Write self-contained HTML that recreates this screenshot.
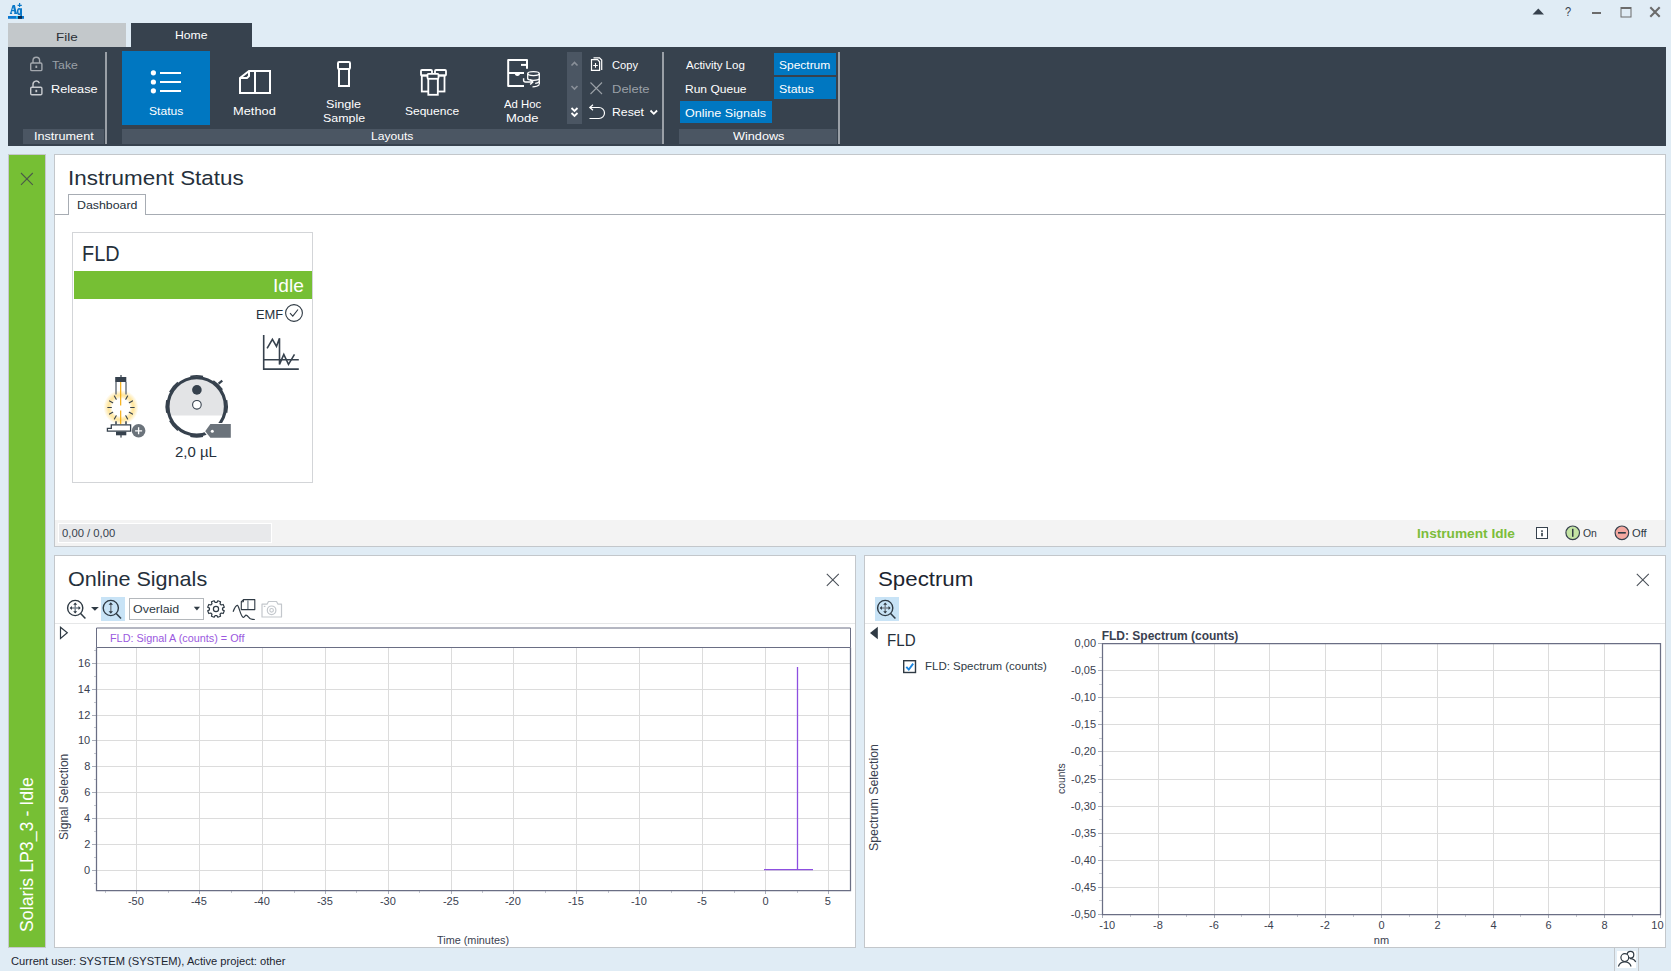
<!DOCTYPE html>
<html><head><meta charset="utf-8"><style>
html,body{margin:0;padding:0;}
body{width:1671px;height:971px;background:#e0ecf5;position:relative;overflow:hidden;font-family:"Liberation Sans",sans-serif;}
.t{position:absolute;white-space:nowrap;line-height:1;}
.r{position:absolute;}
svg.r{overflow:visible;}
</style></head><body>
<svg class="r" style="left:6px;top:1px;" width="20" height="20" viewBox="0 0 20 20"><g transform="translate(-6,-1)">
<path d="M12.6 5 H14.9 L16.8 13.3 H14.6 Z" fill="#0a78c8"/>
<path d="M13 5.6 L10.7 13.3 M11.8 10.6 H15.4 M9.9 13.3 H12.1 M14.2 13.3 H17.3" fill="none" stroke="#0a78c8" stroke-width="1.2"/>
<ellipse cx="19.2" cy="11.6" rx="1.5" ry="2.8" fill="none" stroke="#0a78c8" stroke-width="1.5"/>
<path d="M21.1 8.3 V16.2" stroke="#0a78c8" stroke-width="1.8"/>
<path d="M19.6 3 V7 M17.6 5.4 H21.8" stroke="#0a78c8" stroke-width="1.2"/>
<rect x="8" y="16" width="16" height="2.8" fill="#0a78d0"/>
<rect x="16" y="16" width="1.8" height="2.8" fill="#2cb8ee"/>
<rect x="18" y="16" width="4" height="2.8" fill="#0b2a4a"/>
</g></svg>
<svg class="r" style="left:1532px;top:8px;" width="13" height="7" viewBox="0 0 13 7"><path d="M0.5 6.5 L6.3 0.5 L12 6.5 Z" fill="#36414d"/></svg>
<div class="t" style="left:1564.56px;top:6.02px;font-size:12.5px;color:#36414d;transform:scaleX(0.8833);transform-origin:0 0;">?</div>
<div class="r" style="left:1592px;top:12px;width:9px;height:2px;background:#6b6b6b;"></div>
<svg class="r" style="left:1620px;top:6px;" width="12" height="11.5" viewBox="0 0 12 11.5"><rect x="1" y="1.5" width="10" height="9.5" fill="none" stroke="#6b6b6b" stroke-width="1"/><rect x="1" y="1" width="10" height="2" fill="#6b6b6b"/></svg>
<svg class="r" style="left:1649px;top:6px;" width="12" height="11.5" viewBox="0 0 12 11.5"><path d="M1.3 1.3 L10.7 10.7 M10.7 1.3 L1.3 10.7" stroke="#6b6b6b" stroke-width="2.1"/></svg>
<div class="r" style="left:8px;top:23px;width:118px;height:24px;background:#c3c8cb;"></div>
<div class="t" style="left:55.98px;top:32.37px;font-size:11.5px;color:#2a2f35;transform:scaleX(1.1679);transform-origin:0 0;">File</div>
<div class="r" style="left:131px;top:23px;width:121px;height:24px;background:#37424e;"></div>
<div class="t" style="left:175.07px;top:30.37px;font-size:11.5px;color:#ffffff;transform:scaleX(1.0598);transform-origin:0 0;">Home</div>
<div class="r" style="left:8px;top:47px;width:1658px;height:99px;background:#37424e;"></div>
<svg class="r" style="left:29px;top:56px;" width="15" height="16" viewBox="0 0 15 16"><path d="M4 7 V4.5 A3.3 3.3 0 0 1 10.6 4.5 V7" fill="none" stroke="#a3a8ae" stroke-width="1.4"/><rect x="1.7" y="7" width="11.2" height="7.6" rx="1.2" fill="none" stroke="#a3a8ae" stroke-width="1.4"/><rect x="6.4" y="9.6" width="1.8" height="2.4" fill="#a3a8ae"/></svg>
<div class="t" style="left:51.73px;top:59.87px;font-size:11.5px;color:#9aa0a7;transform:scaleX(1.0638);transform-origin:0 0;">Take</div>
<svg class="r" style="left:29px;top:80px;" width="15" height="16" viewBox="0 0 15 16"><path d="M4 7.2 V4.5 A3.3 3.3 0 0 1 10.4 3.2" fill="none" stroke="#c9ccd0" stroke-width="1.4"/><rect x="1.7" y="7.2" width="11.2" height="7.6" rx="1.2" fill="none" stroke="#c9ccd0" stroke-width="1.4"/><rect x="6.4" y="9.8" width="1.8" height="2.4" fill="#c9ccd0"/></svg>
<div class="t" style="left:51.03px;top:83.87px;font-size:11.5px;color:#ffffff;transform:scaleX(1.1043);transform-origin:0 0;">Release</div>
<div class="r" style="left:23px;top:129px;width:81px;height:15px;background:#4b5663;"></div>
<div class="t" style="left:33.70px;top:130.87px;font-size:11.5px;color:#ffffff;transform:scaleX(1.0986);transform-origin:0 0;">Instrument</div>
<div class="r" style="left:105px;top:52px;width:2px;height:92px;background:#9aa0a7;"></div>
<div class="r" style="left:122px;top:51px;width:88px;height:74px;background:#0077c1;"></div>
<svg class="r" style="left:150px;top:69px;" width="33" height="25" viewBox="0 0 33 25">
<circle cx="3.4" cy="3.8" r="2.6" fill="#fff"/><circle cx="3.4" cy="13" r="2.6" fill="#fff"/><circle cx="3.4" cy="21.8" r="2.6" fill="#fff"/>
<rect x="10" y="3" width="21" height="2" fill="#fff"/><rect x="10" y="12" width="21" height="2" fill="#fff"/><rect x="10" y="21" width="21" height="2" fill="#fff"/>
</svg>
<div class="t" style="left:148.77px;top:105.87px;font-size:11.5px;color:#ffffff;transform:scaleX(1.0520);transform-origin:0 0;">Status</div>
<svg class="r" style="left:238px;top:69px;" width="34" height="26" viewBox="0 0 34 26"><path d="M11 2 H32 V24 H2 V9 L11 2 Z M17 2 V24 M2 9 H9 L11 7 V2" fill="none" stroke="#fff" stroke-width="2" stroke-linejoin="miter"/></svg>
<div class="t" style="left:233.02px;top:105.87px;font-size:11.5px;color:#ffffff;transform:scaleX(1.1156);transform-origin:0 0;">Method</div>
<svg class="r" style="left:335px;top:59px;" width="18" height="29" viewBox="0 0 18 29"><rect x="3" y="3" width="12" height="7" rx="1.2" fill="none" stroke="#fff" stroke-width="2"/><rect x="4" y="10" width="10" height="17" fill="none" stroke="#fff" stroke-width="2"/></svg>
<div class="t" style="left:326.45px;top:98.87px;font-size:11.5px;color:#ffffff;transform:scaleX(1.0968);transform-origin:0 0;">Single</div>
<div class="t" style="left:322.96px;top:112.87px;font-size:11.5px;color:#ffffff;transform:scaleX(1.0789);transform-origin:0 0;">Sample</div>
<svg class="r" style="left:418px;top:67px;" width="30" height="30" viewBox="0 0 30 30">
<rect x="3" y="3" width="11" height="5.5" rx="1" fill="none" stroke="#fff" stroke-width="1.8"/>
<rect x="3.8" y="8.5" width="7" height="16" fill="none" stroke="#fff" stroke-width="1.8"/>
<rect x="17" y="3" width="11" height="5.5" rx="1" fill="none" stroke="#fff" stroke-width="1.8"/>
<rect x="19.5" y="8.5" width="7" height="16" fill="none" stroke="#fff" stroke-width="1.8"/>
<rect x="9.5" y="6.8" width="11" height="5" rx="1" fill="#37424e" stroke="#fff" stroke-width="1.8"/>
<rect x="10.3" y="11.8" width="9.5" height="16" fill="#37424e" stroke="#fff" stroke-width="1.8"/>
</svg>
<div class="t" style="left:405.48px;top:105.87px;font-size:11.5px;color:#ffffff;transform:scaleX(1.0443);transform-origin:0 0;">Sequence</div>
<svg class="r" style="left:505px;top:57px;" width="38" height="34" viewBox="0 0 38 34">
<path d="M19 28.9 H3.2 V3.1 H22 V11.8" fill="none" stroke="#fff" stroke-width="2" stroke-linejoin="round"/>
<path d="M16 7.9 H22" stroke="#fff" stroke-width="2"/>
<path d="M3.2 16 H19" stroke="#fff" stroke-width="2"/>
<path d="M9.8 16.5 A2.6 2.4 0 0 0 15 16.5 Z" fill="#fff"/>
<ellipse cx="28.5" cy="16.6" rx="5.8" ry="2" fill="none" stroke="#fff" stroke-width="1.3"/>
<path d="M22.7 16.6 V22.5 M34.3 16.6 V27.6 M22.7 21.3 A5.8 2 0 0 0 34.3 21.3" fill="none" stroke="#fff" stroke-width="1.3"/>
<path d="M30.2 26.3 Q33 26.2 34.3 24.6 M27.5 29.8 Q32.5 29.8 34.3 27.6" fill="none" stroke="#fff" stroke-width="1.3"/>
<path d="M18.6 21.2 V23.3 Q18.6 25 20.5 25 H27.6" fill="none" stroke="#fff" stroke-width="1.4"/>
<path d="M25.2 22.4 L27.8 25 L25.2 27.6" fill="none" stroke="#fff" stroke-width="1.4"/>
</svg>
<div class="t" style="left:504.00px;top:98.87px;font-size:11.5px;color:#ffffff;transform:scaleX(0.9867);transform-origin:0 0;">Ad Hoc</div>
<div class="t" style="left:506.01px;top:112.87px;font-size:11.5px;color:#ffffff;transform:scaleX(1.1324);transform-origin:0 0;">Mode</div>
<div class="r" style="left:567px;top:52px;width:15px;height:72px;background:#4b5663;"></div>
<svg class="r" style="left:567px;top:52px;" width="15" height="72" viewBox="0 0 15 72">
<path d="M4.5 13.5 L7.5 10.5 L10.5 13.5" fill="none" stroke="#8a9099" stroke-width="1.6"/>
<path d="M4.5 34 L7.5 37 L10.5 34" fill="none" stroke="#8a9099" stroke-width="1.6"/>
<path d="M4.5 56 L7.5 59 L10.5 56 M4.5 61 L7.5 64 L10.5 61" fill="none" stroke="#fff" stroke-width="1.8"/>
</svg>
<svg class="r" style="left:589px;top:56px;" width="16" height="17" viewBox="0 0 16 17">
<path d="M4.5 1.8 H10.5 L12.7 4 V14" fill="none" stroke="#fff" stroke-width="1.2"/>
<path d="M2.5 3.6 H8.6 L10.6 5.8 V14.4 H2.5 Z" fill="#37424e" stroke="#fff" stroke-width="1.2"/>
<path d="M6.5 7.1 V11.8 M4.2 9.5 H8.8" stroke="#fff" stroke-width="1.1"/>
</svg>
<div class="t" style="left:611.52px;top:59.87px;font-size:11.5px;color:#ffffff;transform:scaleX(0.9668);transform-origin:0 0;">Copy</div>
<svg class="r" style="left:589px;top:81px;" width="15" height="15" viewBox="0 0 15 15"><path d="M1.5 1.5 L13 13 M13 1.5 L1.5 13" stroke="#9aa0a7" stroke-width="1.1"/></svg>
<div class="t" style="left:611.51px;top:83.87px;font-size:11.5px;color:#9aa0a7;transform:scaleX(1.1294);transform-origin:0 0;">Delete</div>
<svg class="r" style="left:588px;top:104px;" width="18" height="16" viewBox="0 0 18 16"><path d="M2 3.5 H11 A5.5 5.5 0 0 1 11 14.5 H1.5" fill="none" stroke="#fff" stroke-width="1.2"/><path d="M5 0.8 L1.8 3.5 L5 6.2" fill="none" stroke="#fff" stroke-width="1.2"/></svg>
<div class="t" style="left:611.57px;top:106.87px;font-size:11.5px;color:#ffffff;transform:scaleX(1.0644);transform-origin:0 0;">Reset</div>
<svg class="r" style="left:649px;top:109px;" width="10" height="7" viewBox="0 0 10 7"><path d="M1.5 1.5 L4.8 4.8 L8.1 1.5" fill="none" stroke="#fff" stroke-width="1.8"/></svg>
<div class="r" style="left:122px;top:129px;width:540px;height:15px;background:#4b5663;"></div>
<div class="t" style="left:371.08px;top:130.87px;font-size:11.5px;color:#ffffff;transform:scaleX(1.0513);transform-origin:0 0;">Layouts</div>
<div class="r" style="left:662px;top:52px;width:2px;height:92px;background:#9aa0a7;"></div>
<div class="t" style="left:686.00px;top:60.37px;font-size:11.5px;color:#ffffff;">Activity Log</div>
<div class="t" style="left:685.08px;top:83.87px;font-size:11.5px;color:#ffffff;transform:scaleX(1.0458);transform-origin:0 0;">Run Queue</div>
<div class="r" style="left:680px;top:101px;width:92px;height:22px;background:#0077c1;"></div>
<div class="t" style="left:685.45px;top:107.87px;font-size:11.5px;color:#ffffff;transform:scaleX(1.0922);transform-origin:0 0;">Online Signals</div>
<div class="r" style="left:774px;top:53px;width:62px;height:22px;background:#0077c1;"></div>
<div class="t" style="left:779.48px;top:60.37px;font-size:11.5px;color:#ffffff;transform:scaleX(1.0417);transform-origin:0 0;">Spectrum</div>
<div class="r" style="left:774px;top:77px;width:62px;height:22px;background:#0077c1;"></div>
<div class="t" style="left:779.46px;top:83.87px;font-size:11.5px;color:#ffffff;transform:scaleX(1.0709);transform-origin:0 0;">Status</div>
<div class="r" style="left:679px;top:129px;width:158px;height:15px;background:#4b5663;"></div>
<div class="t" style="left:733.00px;top:130.87px;font-size:11.5px;color:#ffffff;transform:scaleX(1.1027);transform-origin:0 0;">Windows</div>
<div class="r" style="left:838px;top:52px;width:2px;height:92px;background:#9aa0a7;"></div>
<div class="r" style="left:8px;top:154px;width:36px;height:792px;border:1px solid #c5c8cc;background:#76bf34;"></div>
<svg class="r" style="left:20px;top:172px;" width="14" height="14" viewBox="0 0 14 14"><path d="M1 1 L12.8 12.8 M12.8 1 L1 12.8" stroke="#4b5a48" stroke-width="1.1"/></svg>
<div class="t" style="left:18.19px;top:931.50px;font-size:18.8px;color:#ffffff;transform:rotate(-90deg) scaleX(0.9447);transform-origin:0 0;">Solaris LP3_3 - Idle</div>
<div class="r" style="left:54px;top:154px;width:1610px;height:391px;border:1px solid #c3c7cb;background:#ffffff;"></div>
<div class="t" style="left:67.65px;top:167.55px;font-size:20.5px;color:#25303b;transform:scaleX(1.0937);transform-origin:0 0;">Instrument Status</div>
<div class="r" style="left:55px;top:214px;width:1610px;height:1px;background:#a7acb3;"></div>
<div class="r" style="left:68px;top:194px;width:76px;height:19px;border:1px solid #a7acb3;background:#ffffff;border-bottom:none;height:20px;"></div>
<div class="t" style="left:76.67px;top:199.18px;font-size:11.6px;color:#25303b;transform:scaleX(1.0665);transform-origin:0 0;">Dashboard</div>
<div class="r" style="left:72px;top:232px;width:239px;height:249px;border:1px solid #d3d5d8;background:#ffffff;"></div>
<div class="t" style="left:81.84px;top:243.16px;font-size:22.5px;color:#25303b;transform:scaleX(0.8833);transform-origin:0 0;">FLD</div>
<div class="r" style="left:74px;top:271px;width:238px;height:28px;background:#76bf34;"></div>
<div class="t" style="left:273.02px;top:276.94px;font-size:18.5px;color:#ffffff;transform:scaleX(1.0338);transform-origin:0 0;">Idle</div>
<div class="t" style="left:256.21px;top:307.90px;font-size:13px;color:#25303b;transform:scaleX(0.9923);transform-origin:0 0;">EMF</div>
<svg class="r" style="left:284px;top:303px;" width="20" height="20" viewBox="0 0 20 20"><circle cx="10" cy="10" r="8.4" fill="none" stroke="#2f3a44" stroke-width="1.1"/><path d="M6 10.2 L8.8 13.2 L14 6.5" fill="none" stroke="#2f3a44" stroke-width="1.1"/></svg>
<svg class="r" style="left:262px;top:334px;" width="38" height="37" viewBox="0 0 38 37"><path d="M1.7 1 V35.1 H36.8 M1.7 25.7 H36.8" fill="none" stroke="#36414d" stroke-width="1.6"/><path d="M5.1 14.4 L10.4 5.3 L14.5 12.3 L17.5 4.3 V30.4 L21.8 20.4 L26.5 30.4 L32.5 20.4" fill="none" stroke="#36414d" stroke-width="1.6" stroke-linejoin="miter"/></svg>
<div class="r" style="left:55px;top:520px;width:1610px;height:26px;background:#f3f3f3;"></div>
<div class="r" style="left:58px;top:523px;width:212px;height:18px;border:1px solid #ffffff;background:#e8e9eb;"></div>
<div class="t" style="left:62.12px;top:527.69px;font-size:11px;color:#36414d;transform:scaleX(1.0244);transform-origin:0 0;">0,00 / 0,00</div>
<div class="t" style="left:1416.58px;top:527.20px;font-size:13px;color:#7cbd3a;font-weight:bold;transform:scaleX(1.0511);transform-origin:0 0;">Instrument Idle</div>
<svg class="r" style="left:100px;top:370px;" width="48" height="72" viewBox="0 0 48 72">
<defs><radialGradient id="glow" cx="50%" cy="50%" r="50%"><stop offset="0%" stop-color="#ffffff" stop-opacity="1"/><stop offset="50%" stop-color="#ffffff" stop-opacity="1"/><stop offset="72%" stop-color="#ffd55e" stop-opacity="0.6"/><stop offset="100%" stop-color="#ffd55e" stop-opacity="0"/></radialGradient></defs>
<circle cx="21" cy="37.5" r="17.5" fill="url(#glow)"/>
<rect x="15.2" y="7" width="11.1" height="5" fill="#36414d"/>
<rect x="20.4" y="5" width="1.2" height="2.5" fill="#36414d"/>
<path d="M16 12 V24.5 M26 12 V24.5" stroke="#6f7780" stroke-width="1.5"/>
<path d="M16 51.2 V54.5 M26 51.2 V54.5" stroke="#36414d" stroke-width="1.5"/>
<path d="M20.7 12 V35.6 M20.7 40.4 V54.2" stroke="#f5a800" stroke-width="1.1"/>
<g stroke="#36414d" stroke-width="1.15" stroke-linecap="round">
<path d="M30.60 37.50 L34.20 37.50 M29.31 42.30 L32.43 44.10 M25.80 45.81 L27.60 48.93 M16.20 45.81 L14.40 48.93 M12.69 42.30 L9.57 44.10 M11.40 37.50 L7.80 37.50 M12.69 32.70 L9.57 30.90 M16.20 29.19 L14.40 26.07 M25.80 29.19 L27.60 26.07 M29.31 32.70 L32.43 30.90"/>
</g>
<path d="M11.3 54.8 H30.6 V61.2 H7.4 V58.3 H11.3 Z" fill="#ffffff" stroke="#36414d" stroke-width="1.3"/>
<rect x="16" y="61.6" width="10.3" height="3.7" fill="#36414d"/>
<rect x="20.4" y="65" width="1.2" height="2.6" fill="#36414d"/>
<circle cx="38.6" cy="60.8" r="6.8" fill="#6b737b"/>
<path d="M38.6 57.3 V64.3 M35.1 60.8 H42.1" stroke="#ffffff" stroke-width="1.3"/>
</svg>
<svg class="r" style="left:160px;top:370px;" width="76" height="72" viewBox="0 0 76 72">
<path d="M10.25 45.6 A28 28 0 1 1 63.15 45.6 Z" fill="#e3e4e6"/>
<circle cx="36.7" cy="36.4" r="28.7" fill="none" stroke="#36414d" stroke-width="3.1"/>
<path d="M30.36 6.57 A30.5 30.5 0 0 1 43.04 6.57 M9.77 22.08 A30.5 30.5 0 0 1 17.92 12.37 M6.87 42.74 A30.5 30.5 0 0 1 6.87 30.06 M17.92 60.43 A30.5 30.5 0 0 1 9.77 50.72 M43.04 66.23 A30.5 30.5 0 0 1 30.36 66.23 M66.53 30.06 A30.5 30.5 0 0 1 66.53 42.74 M53.31 10.82 A30.5 30.5 0 0 1 62.28 19.79" fill="none" stroke="#36414d" stroke-width="1.6"/>
<path d="M58.6 13.7 L62.3 10.7" stroke="#36414d" stroke-width="2.2"/>
<circle cx="36.9" cy="19.9" r="4.8" fill="#36414d"/>
<circle cx="36.9" cy="34.8" r="4.3" fill="#ffffff" stroke="#36414d" stroke-width="1.1"/>
<path d="M45.2 61.2 L50.4 54.1 H70.8 V67.8 H50.4 Z" fill="#6b737b" stroke="#ffffff" stroke-width="2.2" stroke-linejoin="round"/>
<path d="M45.2 61.2 L50.4 54.1 H70.8 V67.8 H50.4 Z" fill="#6b737b"/>
<circle cx="52.3" cy="61.2" r="1.5" fill="#ffffff"/>
</svg>
<div class="t" style="left:175.28px;top:443.88px;font-size:15.5px;color:#25303b;transform:scaleX(0.9638);transform-origin:0 0;">2,0 µL</div>
<svg class="r" style="left:1535px;top:526px;" width="15" height="14" viewBox="0 0 15 14"><rect x="1.5" y="1.5" width="11" height="11" fill="#ffffff" stroke="#36414d" stroke-width="1"/><rect x="6.2" y="4.3" width="1.6" height="1.6" fill="#2f3a44"/><rect x="6.2" y="6.8" width="1.6" height="3.5" fill="#2f3a44"/></svg>
<svg class="r" style="left:1564px;top:524px;" width="18" height="18" viewBox="0 0 18 18"><circle cx="8.7" cy="8.8" r="6.8" fill="#c3e3a3" stroke="#36414d" stroke-width="1.2"/><rect x="8" y="4.8" width="1.5" height="8" fill="#2f3a44"/></svg>
<div class="t" style="left:1582.55px;top:528.07px;font-size:11.5px;color:#2f3a44;transform:scaleX(0.9062);transform-origin:0 0;">On</div>
<svg class="r" style="left:1613px;top:524px;" width="18" height="18" viewBox="0 0 18 18"><circle cx="8.9" cy="8.8" r="6.8" fill="#f4a8a0" stroke="#36414d" stroke-width="1.2"/><rect x="5" y="8" width="7.8" height="1.6" fill="#2f3a44"/></svg>
<div class="t" style="left:1632.11px;top:528.07px;font-size:11.5px;color:#2f3a44;transform:scaleX(0.9709);transform-origin:0 0;">Off</div>
<div class="r" style="left:54px;top:555px;width:800px;height:391px;border:1px solid #c3c7cb;background:#ffffff;"></div>
<div class="t" style="left:67.77px;top:568.80px;font-size:20.2px;color:#25303b;transform:scaleX(1.0693);transform-origin:0 0;">Online Signals</div>
<svg class="r" style="left:826px;top:573px;" width="14" height="14" viewBox="0 0 14 14"><path d="M0.8 0.8 L12.8 12.8 M12.8 0.8 L0.8 12.8" stroke="#4a5058" stroke-width="1.05"/></svg>
<svg class="r" style="left:65px;top:597px;" width="24" height="24" viewBox="0 0 24 24">
<circle cx="10.2" cy="11" r="7.6" fill="none" stroke="#2f3a44" stroke-width="1.4"/>
<path d="M15.6 16.6 L20.4 21.6" stroke="#2f3a44" stroke-width="1.5"/>
<path d="M10.2 6.5 V15.5 M5.7 11 H14.7" stroke="#7d8892" stroke-width="1.5"/>
<path d="M8.2 7.7 L10.2 5.5 L12.2 7.7 Z M8.2 14.3 L10.2 16.5 L12.2 14.3 Z M6.9 9 L4.7 11 L6.9 13 Z M13.5 9 L15.7 11 L13.5 13 Z" fill="#2f3a44"/>
</svg>
<svg class="r" style="left:90px;top:606px;" width="10" height="6" viewBox="0 0 10 6"><path d="M1 1 H8.8 L4.9 4.8 Z" fill="#2f3a44"/></svg>
<div class="r" style="left:101px;top:597px;width:24px;height:24px;background:#c8e3f6;"></div>
<svg class="r" style="left:101px;top:597px;" width="24" height="24" viewBox="0 0 24 24">
<circle cx="9.8" cy="11" r="7.6" fill="none" stroke="#2f3a44" stroke-width="1.4"/>
<path d="M15.2 16.6 L20 21.6" stroke="#2f3a44" stroke-width="1.5"/>
<path d="M9.8 7 V15" stroke="#7d8892" stroke-width="1.6"/>
<path d="M7.6 7.8 L9.8 5.3 L12 7.8 Z M7.6 14.2 L9.8 16.7 L12 14.2 Z" fill="#2f3a44"/>
</svg>
<div class="r" style="left:129px;top:598px;width:73px;height:20px;border:1px solid #b4b8bc;background:#ffffff;"></div>
<div class="t" style="left:132.84px;top:603.89px;font-size:11px;color:#2f3a44;transform:scaleX(1.1296);transform-origin:0 0;">Overlaid</div>
<svg class="r" style="left:193px;top:606px;" width="8" height="5" viewBox="0 0 8 5"><path d="M0.8 0.8 H7 L3.9 4.4 Z" fill="#2f3a44"/></svg>
<svg class="r" style="left:206px;top:599px;" width="20" height="20" viewBox="0 0 20 20"><path d="M16.54 10.87 L18.29 11.88 L17.19 14.53 L15.24 14.01 L14.01 15.24 L14.53 17.19 L11.88 18.29 L10.87 16.54 L9.13 16.54 L8.12 18.29 L5.47 17.19 L5.99 15.24 L4.76 14.01 L2.81 14.53 L1.71 11.88 L3.46 10.87 L3.46 9.13 L1.71 8.12 L2.81 5.47 L4.76 5.99 L5.99 4.76 L5.47 2.81 L8.12 1.71 L9.13 3.46 L10.87 3.46 L11.88 1.71 L14.53 2.81 L14.01 4.76 L15.24 5.99 L17.19 5.47 L18.29 8.12 L16.54 9.13 Z" fill="none" stroke="#2f3a44" stroke-width="1.2" stroke-linejoin="round"/><circle cx="10" cy="10" r="2.6" fill="none" stroke="#2f3a44" stroke-width="1.2"/></svg>
<svg class="r" style="left:231px;top:597px;" width="26" height="25" viewBox="0 0 26 25">
<path d="M10.3 4.6 L12.5 2.6 H23.8 V12.6 H10.3 Z" fill="#ffffff" stroke="#2f3a44" stroke-width="1.1" stroke-linejoin="round"/>
<path d="M10.3 4.8 H12.5 V2.6" fill="none" stroke="#2f3a44" stroke-width="1"/>
<path d="M16.9 3.3 V12" stroke="#8a949d" stroke-width="1.5"/>
<path d="M2.1 14.8 C3.5 11 5 8 6.5 8.4 C8 9 9.5 19 12 20.2 C13.5 21 14 18.2 15 18.2 C16.5 18.2 18 21 19.4 21.7 C21 22.3 22.5 22.5 23.8 22.5" fill="none" stroke="#2f3a44" stroke-width="1.2"/>
</svg>
<svg class="r" style="left:260px;top:600px;" width="24" height="19" viewBox="0 0 24 19"><path d="M2 4.2 H7 L8.5 1.5 H16.5 L18 4.2 H21.5 V17 H2 Z" fill="none" stroke="#c3c7cc" stroke-width="1.2" stroke-linejoin="round"/><circle cx="11.6" cy="10.3" r="4.3" fill="none" stroke="#c3c7cc" stroke-width="1.2"/><circle cx="11.6" cy="10.3" r="1.8" fill="none" stroke="#c3c7cc" stroke-width="1.1"/><rect x="3.8" y="5.8" width="1.6" height="1.2" fill="#c3c7cc"/></svg>
<div class="r" style="left:55px;top:623px;width:800px;height:1px;background:#e6e7e8;"></div>
<svg class="r" style="left:59px;top:626px;" width="10" height="14" viewBox="0 0 10 14"><path d="M1.5 1.2 L8.3 6.8 L1.5 12.4 Z" fill="none" stroke="#2f3a44" stroke-width="1.2"/></svg>
<svg class="r" style="left:0px;top:0px;pointer-events:none;" width="1671" height="971" viewBox="0 0 1671 971"><path d="M97 663.5 H850" stroke="#dcdcdc" stroke-width="1"/><path d="M92 663.5 H96" stroke="#a9adb8" stroke-width="1"/><path d="M97 689.5 H850" stroke="#dcdcdc" stroke-width="1"/><path d="M92 689.5 H96" stroke="#a9adb8" stroke-width="1"/><path d="M97 715.5 H850" stroke="#dcdcdc" stroke-width="1"/><path d="M92 715.5 H96" stroke="#a9adb8" stroke-width="1"/><path d="M97 740.5 H850" stroke="#dcdcdc" stroke-width="1"/><path d="M92 740.5 H96" stroke="#a9adb8" stroke-width="1"/><path d="M97 766.5 H850" stroke="#dcdcdc" stroke-width="1"/><path d="M92 766.5 H96" stroke="#a9adb8" stroke-width="1"/><path d="M97 792.5 H850" stroke="#dcdcdc" stroke-width="1"/><path d="M92 792.5 H96" stroke="#a9adb8" stroke-width="1"/><path d="M97 818.5 H850" stroke="#dcdcdc" stroke-width="1"/><path d="M92 818.5 H96" stroke="#a9adb8" stroke-width="1"/><path d="M97 844.5 H850" stroke="#dcdcdc" stroke-width="1"/><path d="M92 844.5 H96" stroke="#a9adb8" stroke-width="1"/><path d="M97 870.5 H850" stroke="#dcdcdc" stroke-width="1"/><path d="M92 870.5 H96" stroke="#a9adb8" stroke-width="1"/><path d="M94 650.5 H96" stroke="#c6c9d0" stroke-width="1"/><path d="M94 676.5 H96" stroke="#c6c9d0" stroke-width="1"/><path d="M94 702.5 H96" stroke="#c6c9d0" stroke-width="1"/><path d="M94 727.5 H96" stroke="#c6c9d0" stroke-width="1"/><path d="M94 753.5 H96" stroke="#c6c9d0" stroke-width="1"/><path d="M94 779.5 H96" stroke="#c6c9d0" stroke-width="1"/><path d="M94 805.5 H96" stroke="#c6c9d0" stroke-width="1"/><path d="M94 831.5 H96" stroke="#c6c9d0" stroke-width="1"/><path d="M94 857.5 H96" stroke="#c6c9d0" stroke-width="1"/><path d="M94 883.5 H96" stroke="#c6c9d0" stroke-width="1"/><path d="M136.5 648 V890" stroke="#dcdcdc" stroke-width="1"/><path d="M136.5 891 V894" stroke="#a9adb8" stroke-width="1"/><path d="M199.5 648 V890" stroke="#dcdcdc" stroke-width="1"/><path d="M199.5 891 V894" stroke="#a9adb8" stroke-width="1"/><path d="M262.5 648 V890" stroke="#dcdcdc" stroke-width="1"/><path d="M262.5 891 V894" stroke="#a9adb8" stroke-width="1"/><path d="M325.5 648 V890" stroke="#dcdcdc" stroke-width="1"/><path d="M325.5 891 V894" stroke="#a9adb8" stroke-width="1"/><path d="M388.5 648 V890" stroke="#dcdcdc" stroke-width="1"/><path d="M388.5 891 V894" stroke="#a9adb8" stroke-width="1"/><path d="M451.5 648 V890" stroke="#dcdcdc" stroke-width="1"/><path d="M451.5 891 V894" stroke="#a9adb8" stroke-width="1"/><path d="M513.5 648 V890" stroke="#dcdcdc" stroke-width="1"/><path d="M513.5 891 V894" stroke="#a9adb8" stroke-width="1"/><path d="M576.5 648 V890" stroke="#dcdcdc" stroke-width="1"/><path d="M576.5 891 V894" stroke="#a9adb8" stroke-width="1"/><path d="M639.5 648 V890" stroke="#dcdcdc" stroke-width="1"/><path d="M639.5 891 V894" stroke="#a9adb8" stroke-width="1"/><path d="M702.5 648 V890" stroke="#dcdcdc" stroke-width="1"/><path d="M702.5 891 V894" stroke="#a9adb8" stroke-width="1"/><path d="M765.5 648 V890" stroke="#dcdcdc" stroke-width="1"/><path d="M765.5 891 V894" stroke="#a9adb8" stroke-width="1"/><path d="M828.5 648 V890" stroke="#dcdcdc" stroke-width="1"/><path d="M828.5 891 V894" stroke="#a9adb8" stroke-width="1"/><path d="M105.5 891 V893" stroke="#c6c9d0" stroke-width="1"/><path d="M168.5 891 V893" stroke="#c6c9d0" stroke-width="1"/><path d="M231.5 891 V893" stroke="#c6c9d0" stroke-width="1"/><path d="M294.5 891 V893" stroke="#c6c9d0" stroke-width="1"/><path d="M356.5 891 V893" stroke="#c6c9d0" stroke-width="1"/><path d="M419.5 891 V893" stroke="#c6c9d0" stroke-width="1"/><path d="M482.5 891 V893" stroke="#c6c9d0" stroke-width="1"/><path d="M545.5 891 V893" stroke="#c6c9d0" stroke-width="1"/><path d="M608.5 891 V893" stroke="#c6c9d0" stroke-width="1"/><path d="M671.5 891 V893" stroke="#c6c9d0" stroke-width="1"/><path d="M734.5 891 V893" stroke="#c6c9d0" stroke-width="1"/><path d="M797.5 891 V893" stroke="#c6c9d0" stroke-width="1"/><path d="M96.5 628 V647.5 H850.5 V628 Z" fill="none" stroke="#6a6e84" stroke-width="1"/><path d="M96.5 647.5 V890.5 H850.5 V647.5" fill="none" stroke="#6a6e84" stroke-width="1.25"/><path d="M764 869.6 H813 M797.5 869.6 V667" fill="none" stroke="#8d4fe0" stroke-width="1.3"/></svg>
<div class="t" style="left:78.05px;top:657.99px;font-size:11px;color:#3a4150;">16</div>
<div class="t" style="left:77.80px;top:683.99px;font-size:11px;color:#3a4150;">14</div>
<div class="t" style="left:78.05px;top:709.99px;font-size:11px;color:#3a4150;">12</div>
<div class="t" style="left:77.92px;top:734.99px;font-size:11px;color:#3a4150;">10</div>
<div class="t" style="left:84.17px;top:760.99px;font-size:11px;color:#3a4150;">8</div>
<div class="t" style="left:84.17px;top:786.99px;font-size:11px;color:#3a4150;">6</div>
<div class="t" style="left:83.92px;top:812.99px;font-size:11px;color:#3a4150;">4</div>
<div class="t" style="left:84.17px;top:838.99px;font-size:11px;color:#3a4150;">2</div>
<div class="t" style="left:84.05px;top:864.99px;font-size:11px;color:#3a4150;">0</div>
<div class="t" style="left:127.90px;top:895.59px;font-size:11px;color:#3a4150;">-50</div>
<div class="t" style="left:190.96px;top:895.59px;font-size:11px;color:#3a4150;">-45</div>
<div class="t" style="left:253.90px;top:895.59px;font-size:11px;color:#3a4150;">-40</div>
<div class="t" style="left:316.96px;top:895.59px;font-size:11px;color:#3a4150;">-35</div>
<div class="t" style="left:379.90px;top:895.59px;font-size:11px;color:#3a4150;">-30</div>
<div class="t" style="left:442.96px;top:895.59px;font-size:11px;color:#3a4150;">-25</div>
<div class="t" style="left:504.90px;top:895.59px;font-size:11px;color:#3a4150;">-20</div>
<div class="t" style="left:567.96px;top:895.59px;font-size:11px;color:#3a4150;">-15</div>
<div class="t" style="left:630.90px;top:895.59px;font-size:11px;color:#3a4150;">-10</div>
<div class="t" style="left:697.02px;top:895.59px;font-size:11px;color:#3a4150;">-5</div>
<div class="t" style="left:762.44px;top:895.59px;font-size:11px;color:#3a4150;">0</div>
<div class="t" style="left:824.64px;top:895.59px;font-size:11px;color:#3a4150;">5</div>
<div class="t" style="left:109.74px;top:632.89px;font-size:11px;color:#9b59e0;transform:scaleX(0.9851);transform-origin:0 0;">FLD: Signal A (counts) = Off</div>
<div class="t" style="left:436.85px;top:935.09px;font-size:11px;color:#3a4150;transform:scaleX(0.9875);transform-origin:0 0;">Time (minutes)</div>
<div class="t" style="left:57.74px;top:840.00px;font-size:12.6px;color:#3a4150;transform:rotate(-90deg) scaleX(0.9551);transform-origin:0 0;">Signal Selection</div>
<div class="r" style="left:864px;top:555px;width:800px;height:391px;border:1px solid #c3c7cb;background:#ffffff;"></div>
<div class="t" style="left:877.54px;top:568.80px;font-size:20.2px;color:#1c2530;transform:scaleX(1.1033);transform-origin:0 0;">Spectrum</div>
<svg class="r" style="left:1636px;top:573px;" width="14" height="14" viewBox="0 0 14 14"><path d="M0.8 0.8 L12.8 12.8 M12.8 0.8 L0.8 12.8" stroke="#4a5058" stroke-width="1.05"/></svg>
<div class="r" style="left:875px;top:597px;width:24px;height:24px;background:#c8e3f6;"></div>
<svg class="r" style="left:875px;top:597px;" width="24" height="24" viewBox="0 0 24 24">
<circle cx="10.2" cy="11" r="7.6" fill="none" stroke="#2f3a44" stroke-width="1.4"/>
<path d="M15.6 16.6 L20.4 21.6" stroke="#2f3a44" stroke-width="1.5"/>
<path d="M10.2 6.5 V15.5 M5.7 11 H14.7" stroke="#7d8892" stroke-width="1.5"/>
<path d="M8.2 7.7 L10.2 5.5 L12.2 7.7 Z M8.2 14.3 L10.2 16.5 L12.2 14.3 Z M6.9 9 L4.7 11 L6.9 13 Z M13.5 9 L15.7 11 L13.5 13 Z" fill="#2f3a44"/>
</svg>
<div class="r" style="left:865px;top:623px;width:800px;height:1px;background:#e6e7e8;"></div>
<svg class="r" style="left:868px;top:625px;" width="12" height="16" viewBox="0 0 12 16"><path d="M9.8 1.7 L2 8 L9.8 14.3 Z" fill="#2f3a44"/></svg>
<div class="t" style="left:887.08px;top:632.21px;font-size:17px;color:#25303b;transform:scaleX(0.8900);transform-origin:0 0;">FLD</div>
<svg class="r" style="left:902px;top:659px;" width="16" height="16" viewBox="0 0 16 16"><rect x="1.7" y="1.7" width="11.8" height="11.8" fill="#ffffff" stroke="#2f3a44" stroke-width="1.4"/><path d="M4.3 7.8 L6.8 10.6 L11.2 4.6" fill="none" stroke="#1b86e0" stroke-width="1.9"/></svg>
<div class="t" style="left:924.91px;top:660.74px;font-size:11.3px;color:#2f3a44;transform:scaleX(1.0152);transform-origin:0 0;">FLD: Spectrum (counts)</div>
<div class="t" style="left:867.74px;top:850.60px;font-size:12.6px;color:#3a4150;transform:rotate(-90deg) scaleX(0.9794);transform-origin:0 0;">Spectrum Selection</div>
<svg class="r" style="left:0px;top:0px;pointer-events:none;" width="1671" height="971" viewBox="0 0 1671 971"><path d="M1098 643.5 H1102" stroke="#a9adb8" stroke-width="1"/><path d="M1103 670.5 H1660" stroke="#dcdcdc" stroke-width="1"/><path d="M1098 670.5 H1102" stroke="#a9adb8" stroke-width="1"/><path d="M1103 697.5 H1660" stroke="#dcdcdc" stroke-width="1"/><path d="M1098 697.5 H1102" stroke="#a9adb8" stroke-width="1"/><path d="M1103 724.5 H1660" stroke="#dcdcdc" stroke-width="1"/><path d="M1098 724.5 H1102" stroke="#a9adb8" stroke-width="1"/><path d="M1103 751.5 H1660" stroke="#dcdcdc" stroke-width="1"/><path d="M1098 751.5 H1102" stroke="#a9adb8" stroke-width="1"/><path d="M1103 779.5 H1660" stroke="#dcdcdc" stroke-width="1"/><path d="M1098 779.5 H1102" stroke="#a9adb8" stroke-width="1"/><path d="M1103 806.5 H1660" stroke="#dcdcdc" stroke-width="1"/><path d="M1098 806.5 H1102" stroke="#a9adb8" stroke-width="1"/><path d="M1103 833.5 H1660" stroke="#dcdcdc" stroke-width="1"/><path d="M1098 833.5 H1102" stroke="#a9adb8" stroke-width="1"/><path d="M1103 860.5 H1660" stroke="#dcdcdc" stroke-width="1"/><path d="M1098 860.5 H1102" stroke="#a9adb8" stroke-width="1"/><path d="M1103 887.5 H1660" stroke="#dcdcdc" stroke-width="1"/><path d="M1098 887.5 H1102" stroke="#a9adb8" stroke-width="1"/><path d="M1098 914.5 H1102" stroke="#a9adb8" stroke-width="1"/><path d="M1099 657.5 H1102" stroke="#c6c9d0" stroke-width="1"/><path d="M1099 684.5 H1102" stroke="#c6c9d0" stroke-width="1"/><path d="M1099 711.5 H1102" stroke="#c6c9d0" stroke-width="1"/><path d="M1099 738.5 H1102" stroke="#c6c9d0" stroke-width="1"/><path d="M1099 765.5 H1102" stroke="#c6c9d0" stroke-width="1"/><path d="M1099 792.5 H1102" stroke="#c6c9d0" stroke-width="1"/><path d="M1099 819.5 H1102" stroke="#c6c9d0" stroke-width="1"/><path d="M1099 846.5 H1102" stroke="#c6c9d0" stroke-width="1"/><path d="M1099 873.5 H1102" stroke="#c6c9d0" stroke-width="1"/><path d="M1099 900.5 H1102" stroke="#c6c9d0" stroke-width="1"/><path d="M1102.5 915 V918" stroke="#a9adb8" stroke-width="1"/><path d="M1158.5 644 V914" stroke="#dcdcdc" stroke-width="1"/><path d="M1158.5 915 V918" stroke="#a9adb8" stroke-width="1"/><path d="M1214.5 644 V914" stroke="#dcdcdc" stroke-width="1"/><path d="M1214.5 915 V918" stroke="#a9adb8" stroke-width="1"/><path d="M1269.5 644 V914" stroke="#dcdcdc" stroke-width="1"/><path d="M1269.5 915 V918" stroke="#a9adb8" stroke-width="1"/><path d="M1325.5 644 V914" stroke="#dcdcdc" stroke-width="1"/><path d="M1325.5 915 V918" stroke="#a9adb8" stroke-width="1"/><path d="M1381.5 644 V914" stroke="#dcdcdc" stroke-width="1"/><path d="M1381.5 915 V918" stroke="#a9adb8" stroke-width="1"/><path d="M1437.5 644 V914" stroke="#dcdcdc" stroke-width="1"/><path d="M1437.5 915 V918" stroke="#a9adb8" stroke-width="1"/><path d="M1493.5 644 V914" stroke="#dcdcdc" stroke-width="1"/><path d="M1493.5 915 V918" stroke="#a9adb8" stroke-width="1"/><path d="M1548.5 644 V914" stroke="#dcdcdc" stroke-width="1"/><path d="M1548.5 915 V918" stroke="#a9adb8" stroke-width="1"/><path d="M1604.5 644 V914" stroke="#dcdcdc" stroke-width="1"/><path d="M1604.5 915 V918" stroke="#a9adb8" stroke-width="1"/><path d="M1660.5 915 V918" stroke="#a9adb8" stroke-width="1"/><path d="M1130.5 915 V917" stroke="#c6c9d0" stroke-width="1"/><path d="M1186.5 915 V917" stroke="#c6c9d0" stroke-width="1"/><path d="M1241.5 915 V917" stroke="#c6c9d0" stroke-width="1"/><path d="M1297.5 915 V917" stroke="#c6c9d0" stroke-width="1"/><path d="M1353.5 915 V917" stroke="#c6c9d0" stroke-width="1"/><path d="M1409.5 915 V917" stroke="#c6c9d0" stroke-width="1"/><path d="M1465.5 915 V917" stroke="#c6c9d0" stroke-width="1"/><path d="M1520.5 915 V917" stroke="#c6c9d0" stroke-width="1"/><path d="M1576.5 915 V917" stroke="#c6c9d0" stroke-width="1"/><path d="M1632.5 915 V917" stroke="#c6c9d0" stroke-width="1"/><path d="M1102.5 643.5 V914.5 H1660.5 V643.5 Z" fill="none" stroke="#6a6e84" stroke-width="1.25"/></svg>
<div class="t" style="left:1074.60px;top:637.69px;font-size:11px;color:#3a4150;">0,00</div>
<div class="t" style="left:1070.97px;top:664.69px;font-size:11px;color:#3a4150;">-0,05</div>
<div class="t" style="left:1070.85px;top:691.69px;font-size:11px;color:#3a4150;">-0,10</div>
<div class="t" style="left:1070.97px;top:718.69px;font-size:11px;color:#3a4150;">-0,15</div>
<div class="t" style="left:1070.85px;top:745.69px;font-size:11px;color:#3a4150;">-0,20</div>
<div class="t" style="left:1070.97px;top:773.69px;font-size:11px;color:#3a4150;">-0,25</div>
<div class="t" style="left:1070.85px;top:800.69px;font-size:11px;color:#3a4150;">-0,30</div>
<div class="t" style="left:1070.97px;top:827.69px;font-size:11px;color:#3a4150;">-0,35</div>
<div class="t" style="left:1070.85px;top:854.69px;font-size:11px;color:#3a4150;">-0,40</div>
<div class="t" style="left:1070.97px;top:881.69px;font-size:11px;color:#3a4150;">-0,45</div>
<div class="t" style="left:1070.85px;top:908.69px;font-size:11px;color:#3a4150;">-0,50</div>
<div class="t" style="left:1099.30px;top:919.59px;font-size:11px;color:#3a4150;">-10</div>
<div class="t" style="left:1153.03px;top:919.59px;font-size:11px;color:#3a4150;">-8</div>
<div class="t" style="left:1209.03px;top:919.59px;font-size:11px;color:#3a4150;">-6</div>
<div class="t" style="left:1263.90px;top:919.59px;font-size:11px;color:#3a4150;">-4</div>
<div class="t" style="left:1320.03px;top:919.59px;font-size:11px;color:#3a4150;">-2</div>
<div class="t" style="left:1378.44px;top:919.59px;font-size:11px;color:#3a4150;">0</div>
<div class="t" style="left:1434.44px;top:919.59px;font-size:11px;color:#3a4150;">2</div>
<div class="t" style="left:1490.44px;top:919.59px;font-size:11px;color:#3a4150;">4</div>
<div class="t" style="left:1545.44px;top:919.59px;font-size:11px;color:#3a4150;">6</div>
<div class="t" style="left:1601.44px;top:919.59px;font-size:11px;color:#3a4150;">8</div>
<div class="t" style="left:1651.33px;top:919.59px;font-size:11px;color:#3a4150;">10</div>
<div class="t" style="left:1101.65px;top:629.64px;font-size:12px;color:#3a4150;font-weight:bold;">FLD: Spectrum (counts)</div>
<div class="t" style="left:1373.81px;top:934.99px;font-size:11px;color:#3a4150;">nm</div>
<div class="t" style="left:1055.99px;top:794.30px;font-size:11px;color:#3a4150;transform:rotate(-90deg) scaleX(0.9442);transform-origin:0 0;">counts</div>
<div class="t" style="left:10.72px;top:954.68px;font-size:11.6px;color:#1c2530;transform:scaleX(0.9614);transform-origin:0 0;">Current user: SYSTEM (SYSTEM), Active project: other</div>
<div class="r" style="left:1614px;top:947px;width:23px;height:24px;border:1px solid #c3c7cb;background:#e3eef6;"></div>
<div class="r" style="left:1617px;top:951px;width:19px;height:17px;background:#ffffff;"></div>
<svg class="r" style="left:1614px;top:948px;" width="25" height="24" viewBox="0 0 25 24"><circle cx="16.5" cy="6.7" r="3.3" fill="none" stroke="#2f3a44" stroke-width="1.2"/><path d="M16 10.6 A6 6 0 0 1 21.7 13.9" fill="none" stroke="#2f3a44" stroke-width="1.2"/><circle cx="10.8" cy="9.6" r="3.9" fill="#ffffff" stroke="#2f3a44" stroke-width="1.2"/><path d="M4.4 18.5 A6.7 6.7 0 0 1 17.1 18.5" fill="none" stroke="#2f3a44" stroke-width="1.2"/></svg>
</body></html>
